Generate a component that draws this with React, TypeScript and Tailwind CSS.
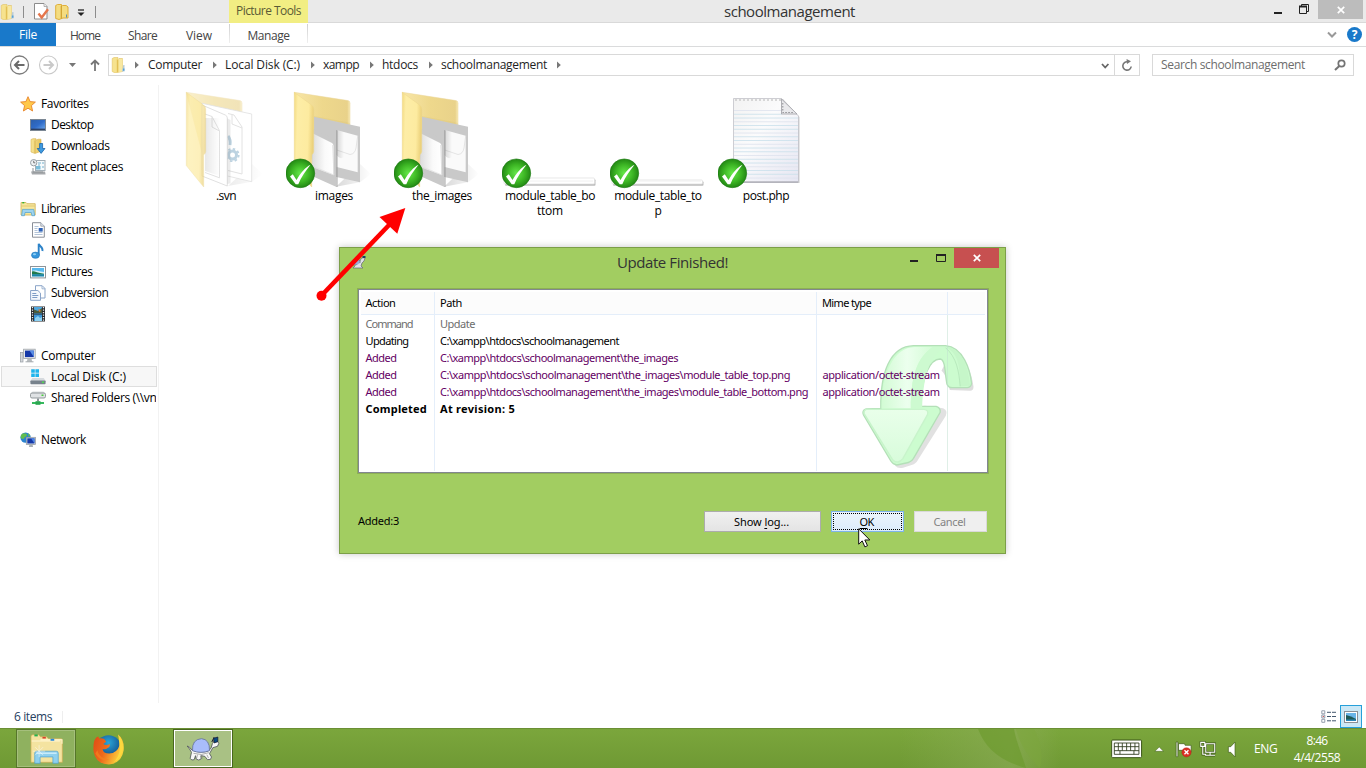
import React, { useLayoutEffect, useRef } from "react";

/* Single line of text whose letter spacing is adjusted to fill a given width. */
function Fit({ w, className = "", children }: { w: number; className?: string; children: React.ReactNode }) {
  const ref = useRef<HTMLSpanElement>(null);
  useLayoutEffect(() => {
    const el = ref.current;
    if (!el) return;
    el.style.letterSpacing = "0px";
    const n = (el.textContent || "").length;
    el.style.letterSpacing = `${(w - el.getBoundingClientRect().width) / n}px`;
  }, [w]);
  return (
    <span ref={ref} className={`inline-block shrink-0 whitespace-pre ${className}`}>
      {children}
    </span>
  );
}

function Defs() {
  return (
    <svg className="absolute h-0 w-0" aria-hidden="true">
      <defs>
        <linearGradient id="flap" x1="0" x2="1" y1="0" y2="0.15">
          <stop offset="0" stopColor="#f3da80" />
          <stop offset="0.2" stopColor="#fdeda6" />
          <stop offset="0.75" stopColor="#fdeba0" />
          <stop offset="1" stopColor="#ecd27c" />
        </linearGradient>
        <linearGradient id="back" x1="0" x2="1">
          <stop offset="0" stopColor="#f8e6a8" />
          <stop offset="0.5" stopColor="#eed88c" />
          <stop offset="0.95" stopColor="#e9d28a" />
          <stop offset="1" stopColor="#f8eab8" />
        </linearGradient>
        <linearGradient id="sheet" x1="0" x2="1">
          <stop offset="0" stopColor="#dcdcdc" />
          <stop offset="0.6" stopColor="#fafafa" />
          <stop offset="1" stopColor="#ffffff" />
        </linearGradient>
        <linearGradient id="cast" x1="0" x2="1">
          <stop offset="0" stopColor="#000" stopOpacity="0.15" />
          <stop offset="1" stopColor="#000" stopOpacity="0" />
        </linearGradient>
        <radialGradient id="ok" cx="0.5" cy="0.5" r="0.55">
          <stop offset="0" stopColor="#66e84a" />
          <stop offset="0.55" stopColor="#3cb524" />
          <stop offset="1" stopColor="#1c7c10" />
        </radialGradient>
        <linearGradient id="note" x1="0" x2="1" y1="0" y2="1">
          <stop offset="0" stopColor="#f2f2f2" />
          <stop offset="0.4" stopColor="#fbfbfc" />
          <stop offset="1" stopColor="#e6e6f2" />
        </linearGradient>
        <linearGradient id="mint" x1="0" x2="1">
          <stop offset="0" stopColor="#d2fbd4" />
          <stop offset="0.5" stopColor="#ecffee" />
          <stop offset="1" stopColor="#d4fcd6" />
        </linearGradient>
        <linearGradient id="mintHead" x1="0" x2="0" y1="0" y2="1">
          <stop offset="0" stopColor="#e9ffea" />
          <stop offset="1" stopColor="#d8fcdb" />
        </linearGradient>
        <linearGradient id="screen" x1="0" x2="1" y1="0" y2="1">
          <stop offset="0" stopColor="#2c5ea8" />
          <stop offset="0.5" stopColor="#2f6bc8" />
          <stop offset="1" stopColor="#74aef0" />
        </linearGradient>
        <linearGradient id="gold" x1="0" x2="1">
          <stop offset="0" stopColor="#f8e596" />
          <stop offset="1" stopColor="#e6c35a" />
        </linearGradient>
        <radialGradient id="globe" cx="0.5" cy="0.3" r="0.7">
          <stop offset="0" stopColor="#2aa5d8" />
          <stop offset="1" stopColor="#0c3a78" />
        </radialGradient>
        <linearGradient id="fox" x1="0" x2="1" y1="0" y2="0.4">
          <stop offset="0" stopColor="#dd4a14" />
          <stop offset="0.5" stopColor="#ee6a1c" />
          <stop offset="1" stopColor="#fbd03c" />
        </linearGradient>
        <linearGradient id="leaf" x1="0" x2="1">
          <stop offset="0" stopColor="#8fae5c" stopOpacity="0" />
          <stop offset="0.7" stopColor="#8fae5c" stopOpacity="0.55" />
          <stop offset="1" stopColor="#8fae5c" stopOpacity="0" />
        </linearGradient>
      </defs>
    </svg>
  );
}

function MiniFolder({ className = "" }: { className?: string }) {
  return (
    <svg viewBox="0 0 16 16" className={`h-4 w-4 shrink-0 ${className}`}>
      <path d="M1.200 1.500 3 .5h4v2l1-1h3.500v13L4 16 1.200 14.500z" fill="#f6e28e" stroke="#dcbb55" strokeWidth=".5" />
      <path d="M5.800 2v13.500l1.500-1V3.500z" fill="#e2bf55" />
      <path d="M7.800 2h3.600v12.600L7.800 15z" fill="#f8e8a2" />
      <path d="M12.300 8h1.200v6.600h-2.700z" fill="#b7cbd6" />
      <path d="M12.200 11.500h1.200v2.300h-1.200z" fill="#3f98d8" />
    </svg>
  );
}

const sideIcons: Record<string, React.ReactNode> = {
  star: (
    <path d="m8 .7 2.1 4.9 5.3.5-4 3.5 1.2 5.4L8 12.2 3.4 15l1.2-5.400-4-3.500 5.300-.5z" fill="#ffc84a" stroke="#e8842a" strokeWidth=".9" strokeLinejoin="round" />
  ),
  desktop: (
    <>
      <rect x=".5" y="2.500" width="15" height="11" fill="url(#screen)" stroke="#7b8794" />
      <path d="M1 12.300h14" stroke="#2c3e60" strokeWidth="1.300" />
    </>
  ),
  downloads: (
    <>
      <path d="M1 1.500 3 .7h3v1.500L8 1.200h3v12L5 15.500 1 14z" fill="url(#gold)" stroke="#d6b251" strokeWidth=".6" />
      <path d="M5 2.500V15" stroke="#cda43c" strokeWidth=".7" />
      <path d="M9.600 5.500h3v5H15l-3.900 4.900-3.900-4.900h2.400z" fill="#3f9be0" stroke="#1b66ab" strokeWidth=".8" />
    </>
  ),
  recent: (
    <>
      <rect x="5.500" y="1.500" width="9.500" height="10" fill="#f5fafc" stroke="#a1adb5" />
      <path d="M8 4h3m-3 2h2m2-2h2m-2 4h2" stroke="#72aecb" />
      <rect x="6" y="7" width="4.500" height="3.500" fill="#79bcd9" />
      <circle cx="3.700" cy="3.700" r="3.200" fill="#eef1f3" stroke="#98a0a6" />
      <path d="M3.700 1.800v2h1.600" stroke="#555" strokeWidth=".8" fill="none" />
      <path d="M1 12.500h14l.6 3H2z" fill="#a5a8ab" />
      <path d="M3 9v4h10" stroke="#8d9296" fill="none" />
    </>
  ),
  libraries: (
    <>
      <path d="M1 1.500h5l1 1.200h8.200V14H1z" fill="#f6e69c" stroke="#d1b154" strokeWidth=".8" />
      <path d="M2.300 1.700h2" stroke="#34b233" strokeWidth="1.400" />
      <path d="M1.300 5h13.500" stroke="#dcc06a" strokeWidth=".8" />
      <path d="M2.500 8.400h11.200l1 6.300h-2.800l-.6-3.200H5l-.6 3.200H1.600z" fill="#9ed4f0" stroke="#5aa6d0" strokeWidth=".8" />
    </>
  ),
  documents: (
    <>
      <path d="M2.500.7h8.300l3.500 3.500v11H2.500z" fill="#fff" stroke="#8a8f98" />
      <path d="M10.800.7v3.500h3.500" fill="#dde4ee" stroke="#8a8f98" strokeWidth=".7" />
      <path d="M4.500 4.500h4M4.500 6.500h3M4.500 8.500h3M4.500 10.500h8M4.500 12.500h8" stroke="#9fb5cf" strokeWidth=".8" />
      <rect x="8.700" y="6" width="4" height="3.600" fill="#2e62b7" />
    </>
  ),
  music: (
    <>
      <path d="M8.700 12V.8c.5 2.600 4.700 3 3.700 7.200" fill="none" stroke="#2c83c9" strokeWidth="1.900" />
      <ellipse cx="5.500" cy="12.200" rx="4" ry="3.100" fill="#3596dc" stroke="#2376b8" strokeWidth=".6" />
      <ellipse cx="4.500" cy="11.300" rx="1.600" ry="1" fill="#8fd0f5" />
    </>
  ),
  pictures: (
    <>
      <rect x=".5" y="2.500" width="15" height="11.400" fill="#fff" stroke="#8e9499" />
      <rect x="2" y="4" width="12" height="8.400" fill="#58b9ef" />
      <path d="M2 7c3-1 5 0 12 1v2H2z" fill="#d8f0f7" />
      <path d="M2 7.500c3-.7 4 1 8 1.600l4 .6v.8H2z" fill="#227a4c" />
      <path d="M2 10.400h12v2H2z" fill="#1f86a5" />
    </>
  ),
  subversion: (
    <>
      <path d="M5.500.7h6.700l2.800 2.800v9.500H5.500z" fill="#fff" stroke="#8aa4c8" />
      <path d="M12 1v2.800h3" fill="none" stroke="#8aa4c8" strokeWidth=".8" />
      <path d="M.6 5.500h7.300l2.600 2.600v7.200H.6z" fill="#f4f8fd" stroke="#8aa4c8" />
      <path d="M2.300 8.500h4m-4 2h6m-6 2h5" stroke="#7d9cc6" />
    </>
  ),
  videos: (
    <>
      <rect x="1" y=".5" width="14" height="15" fill="#26292c" />
      <rect x="4" y="1" width="8" height="6.500" fill="#4fa8e0" />
      <rect x="4" y="8.500" width="8" height="6.500" fill="#3d97d8" />
      <path d="M4 3.500 8 5l4-3v5H4z" fill="#4a5c3c" />
      <path d="M8.500 2.500 11 5l-2 1z" fill="#d9782e" />
      <path d="m5 12 3-2 2 2 2-1v4H5z" fill="#8ed2f2" />
      <path d="M2.500 1v14M13.500 1v14" stroke="#eee" strokeWidth="1.300" strokeDasharray="1.300 1.200" />
    </>
  ),
  computer: (
    <>
      <rect x=".4" y="4.500" width="2.600" height="9.500" fill="#d4d7da" stroke="#999fa5" strokeWidth=".7" />
      <rect x="3.600" y="1.200" width="11.600" height="9.300" fill="#e6e8ea" stroke="#9da3a8" strokeWidth=".8" />
      <rect x="5" y="2.600" width="8.800" height="6.500" fill="#1538a8" />
      <path d="M9.500 2.600h4.300v6.500z" fill="#5b8fe6" />
      <path d="M7.500 10.700h4l.7 3h-5.400z" fill="#b6babd" />
      <path d="M5.500 13.800h8" stroke="#a3a8ad" />
    </>
  ),
  disk: (
    <>
      <path d="M1.200.2h3.600v3.600H1.200zM5.400.2H9v3.600H5.400zM1.200 4.400h3.600V8H1.200zM5.400 4.400H9V8H5.400z" fill="#1fb4ec" />
      <path d="M2.300 9h11.400l2 3H.4z" fill="#d6dade" />
      <rect x=".4" y="11.400" width="15.200" height="3.800" rx=".9" fill="#77828c" />
      <rect x="12" y="12.500" width="2" height="1.400" fill="#4be04b" />
    </>
  ),
  shared: (
    <>
      <path d="M2.500 1.500h11l2 3H.6z" fill="#d9dddf" />
      <rect x=".5" y="3" width="15" height="5" rx="1.500" fill="#dfe2e4" stroke="#888e92" strokeWidth=".9" />
      <rect x="11.500" y="4.500" width="2" height="1.500" fill="#49cd3d" />
      <path d="M8 8.400v3.200" stroke="#8e9599" strokeWidth="2" />
      <path d="M2 13h12" stroke="#35b95d" strokeWidth="2" />
      <rect x="5.500" y="11.200" width="5" height="3.600" fill="#2ba750" />
    </>
  ),
  network: (
    <>
      <circle cx="5.600" cy="5.600" r="5.200" fill="#2c83cf" />
      <path d="M3 1.300C5 2 7 1 7 3S3.500 5 4 7l-3-.5C.3 4 1 2.500 3 1.300zM8 1l2.400 2.600L8.500 5z" fill="#62bd4e" />
      <rect x="6.300" y="5.300" width="9.200" height="7.200" fill="#dfe4e8" stroke="#8c9298" strokeWidth=".7" />
      <rect x="7.300" y="6.300" width="7.200" height="5.200" fill="#1538a8" />
      <path d="M11 6.300h3.500v5.200z" fill="#4c84e4" />
      <path d="M9.500 12.500h3l.6 2.600h-4.200z" fill="#aab0b5" />
    </>
  ),
};

type Row = { icon: string; label: string; w: number; root?: boolean; selected?: boolean };
const sidebar: Row[][] = [
  [
    { icon: "star", label: "Favorites", w: 47.5, root: true },
    { icon: "desktop", label: "Desktop", w: 42.5 },
    { icon: "downloads", label: "Downloads", w: 58.500 },
    { icon: "recent", label: "Recent places", w: 72 },
  ],
  [
    { icon: "libraries", label: "Libraries", w: 44, root: true },
    { icon: "documents", label: "Documents", w: 60.5 },
    { icon: "music", label: "Music", w: 31.5 },
    { icon: "pictures", label: "Pictures", w: 41.5 },
    { icon: "subversion", label: "Subversion", w: 57.5 },
    { icon: "videos", label: "Videos", w: 35 },
  ],
  [
    { icon: "computer", label: "Computer", w: 54.5, root: true },
    { icon: "disk", label: "Local Disk (C:)", w: 75, selected: true },
    { icon: "shared", label: "Shared Folders (\\\\vn", w: 105.5 },
  ],
  [{ icon: "network", label: "Network", w: 45, root: true }],
];

function CheckBadge() {
  return (
    <g>
      <circle cx="14.300" cy="83.300" r="14.400" fill="url(#ok)" stroke="#1d7a12" strokeWidth=".6" />
      <path d="M4 86.500 6.800 84.300 10.500 90C14.500 83 19.500 77.300 24.500 74.800 20 80.500 15 87.500 12.300 94.200h-2.600z" fill="#fff" />
    </g>
  );
}

function FolderBase() {
  return (
    <>
      <path d="M8.300 2.300 62 10.600q2 .4 2 2.600V80L26 70z" fill="url(#back)" stroke="#ead69a" strokeWidth=".5" />
      <path d="M28 26 60 32l4 1v4l-36-8z" fill="#c9ab57" opacity=".12" />
    </>
  );
}

function FolderFlap() {
  return <path d="M8.300 2.300 25.500 15q2.200 1.500 2.200 4v42.500q0 1.500-2 3.500v32L8.300 75.500z" fill="url(#flap)" stroke="#ecd68a" strokeWidth=".5" />;
}

function ImageFolder() {
  return (
    <svg viewBox="0 0 96 99" className="h-[99px] w-24">
      <path d="M50 96.700 74 92.300 85 84 74 74z" fill="url(#cast)" />
      <FolderBase />
      <path d="M28 26.700 74 36.700v55.600L28 82z" fill="#c9c9c9" />
      <path d="M50.700 40 71.700 45.700v36.600L50.700 77z" fill="#fafafa" />
      <path d="M50.700 60 64 64.500q5-.5 6-6.500l1.700-12" fill="none" stroke="#dedede" strokeWidth=".8" />
      <path d="M50.500 40 58 42v25q-4 3-7.500-2z" fill="url(#cast)" />
      <path d="M26 38.500 50 50v46.700L26 86z" fill="#c9c9c9" />
      <path d="M50 40v57h1.800V40.500z" fill="#8f8f8f" opacity=".5" />
      <path d="M27 43.500 46 53q1.500 1 1.500 3v29L26 77z" fill="url(#sheet)" />
      <path d="m26 76 22 9-1.500-30" fill="none" stroke="#dedede" strokeWidth=".7" />
      <FolderFlap />
      <CheckBadge />
    </svg>
  );
}

function SvnFolder() {
  return (
    <svg viewBox="0 0 96 99" className="h-[99px] w-24">
      <path d="M50 96 74 91.700 85 84 74 74z" fill="url(#cast)" opacity=".5" />
      <g opacity=".6"><FolderBase /></g>
      <path d="M24 13.300 73.700 24v67.700L24 80z" fill="#fff" stroke="#e0e0e0" strokeWidth=".8" />
      <path d="M50 23.500 56 25l8 12v47l-14-3.500M54 24.500V34l10 4" fill="none" stroke="#e2e2e2" />
      <g fill="none" stroke="#bdd3e1">
        <circle cx="54.500" cy="65" r="4" strokeWidth="3" />
        <circle cx="54.500" cy="65" r="6.200" strokeWidth="1.800" strokeDasharray="2.400 2.400" />
        <path d="M50 46q3 4 2 9" strokeWidth="3" />
      </g>
      <path d="M24 15 47.300 25q2 1 2 3v68L24 86z" fill="#fff" stroke="#d8d8d8" strokeWidth=".8" />
      <path d="M49.500 28.500V94l3-.7V30z" fill="#777" opacity=".15" />
      <path d="M27 24 34 26.500l7.500 14.300v47L27 82.500M34 26.500V37l7.500 4" fill="none" stroke="#e2e2e2" />
      <path d="M27 28h15v58l-15-5z" fill="url(#cast)" opacity=".6" />
      <g opacity=".7"><FolderFlap /></g>
    </svg>
  );
}

function BarFile({ top }: { top: number }) {
  return (
    <svg viewBox="0 0 96 99" className="h-[99px] w-24">
      <rect x="3" y={top + 1.2} width="90.500" height={94.5 - top} rx="1" fill="#bdbdbd" />
      <rect x="2" y={top} width="90.500" height={94 - top} rx="1" fill="#fff" stroke="#dedede" strokeWidth=".7" />
      <path d="M4 91h87" stroke="#f0f0f0" />
      <CheckBadge />
    </svg>
  );
}

function PhpFile() {
  const lines = Array.from({ length: 19 }, (_, i) => 20.5 + i * 3.75);
  return (
    <svg viewBox="0 0 96 99" className="h-[99px] w-24">
      <path d="M16 9h49l16.500 18v66H16z" fill="#8d8d93" opacity=".45" />
      <path d="M15.500 8.500H63.500L80.500 26v66h-65z" fill="url(#note)" stroke="#c2c2c8" strokeWidth=".8" />
      {lines.map((y, i) => (
        <path key={y} d={`M16 ${y}H${y < 27 ? 64 : 80}`} stroke={i % 3 ? "#c9dfeb" : "#dde2ee"} strokeWidth=".8" />
      ))}
      <path d="M17 10h46" stroke="#cccccc" strokeWidth="1.600" strokeDasharray="2 2" />
      <path d="M63.500 9v15h15.500z" fill="#e9e9ec" stroke="#a6a6ab" strokeWidth=".9" />
      <path d="M64.800 13v9.500h10" fill="none" stroke="#8d8d92" strokeDasharray="1.500 1.500" />
      <path d="M16 92h64" stroke="#9a9aa4" strokeWidth=".8" />
      <CheckBadge />
    </svg>
  );
}

const files = [
  { icon: <SvnFolder />, lines: [{ t: ".svn", w: 20 }] },
  { icon: <ImageFolder />, lines: [{ t: "images", w: 38 }] },
  { icon: <ImageFolder />, lines: [{ t: "the_images", w: 60 }] },
  { icon: <BarFile top={88} />, lines: [{ t: "module_table_bo", w: 90 }, { t: "ttom", w: 26 }] },
  { icon: <BarFile top={90} />, lines: [{ t: "module_table_to", w: 87.5 }, { t: "p", w: 7 }] },
  { icon: <PhpFile />, lines: [{ t: "post.php", w: 46.5 }] },
];

const crumbs = [
  { t: "Computer", w: 54, cell: "w-[77px]" },
  { t: "Local Disk (C:)", w: 75, cell: "w-[98px]" },
  { t: "xampp", w: 36, cell: "w-[59px]" },
  { t: "htdocs", w: 36, cell: "w-[59px]" },
  { t: "schoolmanagement", w: 106, cell: "w-[128px]" },
];

function CrumbArrow() {
  return (
    <svg viewBox="0 0 4 8" className="h-2 w-1 shrink-0"><path d="M0 .5v7L3.800 4z" fill="#777" /></svg>
  );
}

function TitleBar() {
  return (
    <header className="flex h-[23px] shrink-0 border-b border-[#d9d9d9] bg-[#eaeaea]">
      <div className="flex h-[22px] w-[229px] items-center pt-px">
        <MiniFolder />
        <div className="ml-[7px] h-3 w-px bg-[#8c8c8c]" />
        <svg viewBox="0 0 16 17" className="ml-[10px] h-[17px] w-4">
          <path d="M.5.5h9.500l3 3v12.500H.5z" fill="#fff" stroke="#8b8b8b" />
          <path d="M10 .5v3h3" fill="#eee" stroke="#999" strokeWidth=".7" />
          <path d="m4.500 10.500 3.200 4L14 6.300" fill="none" stroke="#e5764c" strokeWidth="2.400" />
        </svg>
        <svg viewBox="0 0 14 16" className="ml-[5px] h-4 w-[14px]">
          <path d="M.7 1.500 2.500.5h4v2l1-1h3.700L13 3v11H8l-4 1.500-3.300-1z" fill="#f4dc80" stroke="#dca92c" strokeWidth=".9" />
          <path d="M6.300 2v12.500" stroke="#cf9f2c" strokeWidth="1.200" />
          <path d="M11.500 10.500v3" stroke="#5c8fb0" />
        </svg>
        <svg viewBox="0 0 8 8" className="ml-[8px] mt-[2px] h-2 w-2"><path d="M1 1h6" stroke="#222" strokeWidth="1.300" /><path d="M.5 3.500h7L4 7z" fill="#222" /></svg>
        <div className="ml-[10px] h-3 w-px bg-[#8c8c8c]" />
      </div>
      <div className="flex h-[23px] w-[79px] items-center justify-center bg-[#f2ee83] text-[#5a5a35]">
        <Fit w={65} className="-mt-px">Picture Tools</Fit>
      </div>
      <div className="flex flex-1 items-center pl-[416px] text-[15px] text-[#333]">
        <Fit w={131}>schoolmanagement</Fit>
      </div>
      <div className="flex h-[19px] items-start">
        <svg viewBox="2 0 44 19" className="h-[19px] w-11">
          <path d="M2 13h8" stroke="#222" strokeWidth="2" />
          <path d="M27.500 6.500h7v7h-7zM29.500 6V4.500h7v7H35" fill="none" stroke="#222" />
          <path d="M27 6.500h8" stroke="#222" strokeWidth="2" />
        </svg>
        <div className="mr-[3px] flex h-[19px] w-[45px] items-center justify-center bg-[#bcbcbc]">
          <svg viewBox="0 0 8 8" className="h-2 w-2"><path d="m.8.8 6.400 6.400m0-6.400L.8 7.200" stroke="#fff" strokeWidth="1.700" /></svg>
        </div>
      </div>
    </header>
  );
}

function RibbonTabs() {
  return (
    <nav className="flex h-6 shrink-0 border-b border-[#dadbdc] bg-white text-[#444]">
      <div className="flex h-[23px] w-14 items-center justify-center bg-[#1979ca] pt-px text-white"><Fit w={18}>File</Fit></div>
      <div className="flex w-[173px] items-center pl-[14px] pt-[3px]">
        <Fit w={30}>Home</Fit>
        <Fit w={29} className="ml-7">Share</Fit>
        <Fit w={26} className="ml-[29px]">View</Fit>
      </div>
      <div className="flex w-[79px] items-center justify-center pt-[3px]">
        <div className="mb-[5px] h-[19px] w-px bg-linear-to-b from-[#d0d0d0] to-[#efefef]" />
        <div className="flex flex-1 justify-center"><Fit w={42}>Manage</Fit></div>
        <div className="mb-[5px] h-[19px] w-px bg-linear-to-b from-[#d0d0d0] to-[#efefef]" />
      </div>
      <div className="flex flex-1 items-center justify-end">
        <svg viewBox="0 0 10 8" className="mr-[10px] h-2 w-[10px]"><path d="m1 1.500 4 4 4-4" fill="none" stroke="#999" strokeWidth="2" /></svg>
        <div className="mr-[4px] flex h-[15px] w-[15px] items-center justify-center rounded-full bg-[#1979ca] text-[12px] leading-none font-bold text-white">?</div>
      </div>
    </nav>
  );
}

function AddressRow() {
  return (
    <div className="flex h-[38px] shrink-0 items-center">
      <svg viewBox="0 0 108 38" className="h-[38px] w-[108px]" fill="none">
        <circle cx="19.500" cy="18" r="9" stroke="#7c7c7c" strokeWidth="1.300" />
        <path d="M24.500 18h-9M19 14l-4 4 4 4" stroke="#6a6a6a" strokeWidth="2" />
        <circle cx="48.500" cy="18" r="9" stroke="#c9c9c9" strokeWidth="1.100" />
        <path d="M43.500 18h9M49 14l4 4-4 4" stroke="#c9c9c9" strokeWidth="2" />
        <path d="M69 16h7l-3.500 4z" fill="#777" />
        <path d="M95 24V13.500M91 17.500l4-4 4 4" stroke="#777" strokeWidth="1.800" />
      </svg>
      <div className="mb-[2px] flex h-[22px] w-[1032px] items-center border border-[#d9d9d9] text-[#1e1e1e]">
        <MiniFolder className="ml-[2px]" />
        <div className="ml-[8px] flex w-[13px] items-center"><CrumbArrow /></div>
        {crumbs.map((c) => (
          <div key={c.t} className={`flex h-5 items-center justify-between pr-2 ${c.cell}`}>
            <Fit w={c.w}>{c.t}</Fit>
            <CrumbArrow />
          </div>
        ))}
        <svg viewBox="-1 0 40 20" className="ml-auto h-5 w-10 shrink-0" fill="none">
          <path d="m2 9 3.200 3.500L8.400 9" stroke="#666" strokeWidth="1.800" />
          <path d="M14.500 0v20" stroke="#d9d9d9" />
          <path d="M27.600 6.800A4.200 4.200 0 1 0 31.200 11.500" stroke="#777" strokeWidth="1.600" />
          <path d="m26.500 4 4.500 2.300-4 2.700z" fill="#777" />
        </svg>
      </div>
      <div className="mb-[2px] ml-3 flex h-[22px] w-[202px] items-center justify-between border border-[#d9d9d9] pl-2 pr-[7px] text-[#6d6d6d]">
        <Fit w={144}>Search schoolmanagement</Fit>
        <svg viewBox="0 0 12 12" className="h-3 w-3" fill="none" stroke="#737373"><circle cx="7.500" cy="4.500" r="3.200" strokeWidth="1.700" /><path d="M5.300 7 1 11" strokeWidth="2" /></svg>
      </div>
    </div>
  );
}

function Sidebar() {
  return (
    <aside className="flex w-[159px] shrink-0 flex-col gap-[21px] border-r border-[#f2f2f2] pt-2">
      {sidebar.map((group) => (
        <div key={group[0].label}>
          {group.map((r) => (
            <div
              key={r.label}
              className={`ml-px flex h-[21px] w-[156px] items-center overflow-hidden border ${r.root ? "pl-[18px]" : "pl-[28px]"} ${r.selected ? "border-[#dedede] bg-[#f7f7f7]" : "border-transparent"}`}
            >
              <svg viewBox="0 0 16 16" className="mr-[5px] h-4 w-4 shrink-0">{sideIcons[r.icon]}</svg>
              <Fit w={r.w}>{r.label}</Fit>
            </div>
          ))}
        </div>
      ))}
    </aside>
  );
}

const logRows = [
  { a: "Command", aw: 47, p: "Update", pw: 35, m: "", mw: 0, c: "text-[#6d6d6d]" },
  { a: "Updating", aw: 43, p: "C:\\xampp\\htdocs\\schoolmanagement", pw: 179, m: "", mw: 0, c: "text-black" },
  { a: "Added", aw: 31, p: "C:\\xampp\\htdocs\\schoolmanagement\\the_images", pw: 238, m: "", mw: 0, c: "text-[#640064]" },
  { a: "Added", aw: 31, p: "C:\\xampp\\htdocs\\schoolmanagement\\the_images\\module_table_top.png", pw: 350, m: "application/octet-stream", mw: 117, c: "text-[#640064]" },
  { a: "Added", aw: 31, p: "C:\\xampp\\htdocs\\schoolmanagement\\the_images\\module_table_bottom.png", pw: 368, m: "application/octet-stream", mw: 117, c: "text-[#640064]" },
  { a: "Completed", aw: 61.5, p: "At revision: 5", pw: 75, m: "", mw: 0, c: "font-bold text-black" },
];

function UpdateDialog() {
  return (
    <section className="absolute left-[339px] top-[247px] flex h-[307px] w-[667px] flex-col border border-[#7c9f48] bg-[#a2cd61] font-['Noto_Sans','Open_Sans',sans-serif] text-[11px] text-black shadow-[0_0_7px_rgba(0,0,0,0.22)]">
      <div className="flex h-[41px] shrink-0 items-start text-[#333]">
        <svg viewBox="0 0 16 16" className="ml-[10px] mt-[7px] h-4 w-4">
          <path d="M3 8c1-5 7-5 8 0v2H3z" fill="#9badd6" stroke="#667" strokeWidth=".7" />
          <path d="M10 8c0-4 2-6 5-5l-1 3-2 2-1 3 2 2H3l2-2" fill="#dfe2e8" stroke="#667" strokeWidth=".7" />
          <path d="M12.500 1h3v2h-3z" fill="#173e66" />
        </svg>
        <div className="flex flex-1 pl-[251px] pt-[3px] font-['Open_Sans','Noto_Sans',sans-serif] text-[15px] leading-[22px]">
          <Fit w={111}>Update Finished!</Fit>
        </div>
        <svg viewBox="1 0 46 20" className="h-5 w-[46px]">
          <path d="M3 13h8" stroke="#222" strokeWidth="2" />
          <path d="M29.500 6.500h9v7h-9z" fill="none" stroke="#222" />
          <path d="M29 7h10" stroke="#222" strokeWidth="2" />
        </svg>
        <div className="mr-[6px] flex h-5 w-[45px] items-center justify-center bg-[#c75050]">
          <svg viewBox="0 0 8 8" className="h-2 w-2"><path d="m.8.8 6.400 6.400m0-6.400L.8 7.200" stroke="#fff" strokeWidth="1.700" /></svg>
        </div>
      </div>

      <div className="relative ml-[18px] flex h-[184px] w-[630px] shrink-0 flex-col border border-[#828790] bg-white outline-1 outline-[#8db054]">
        <svg viewBox="180 300 350 390" className="absolute left-[501px] top-[49px] h-[130px] w-[117px]">
          <path d="M250 508 196 516q-8 6-3 14l88 144q8 10 24 6l32-10q10-6 14-16l82-130q6-16-8-22l-54-8z" fill="#777" opacity=".22" transform="translate(4 6)" />
          <path d="M445 448c-6-20-14-52-25-58l30-60c40 16 60 60 66 108q0 12-10 12z" fill="#777" opacity=".25" transform="translate(4 5)" />
          <path d="M242 508C240 400 270 322 340 320h96c54 4 74 74 78 112q0 12-12 14h-46q-12 0-16-12c-6-32-4-72-20-74-30 0-56 50-58 142h46q14 4 12 18L340 658q-8 12-22 14l-28 6q-12-2-18-12L190 528q-6-14 8-18z" fill="#ccfccf" stroke="#b4e0b8" strokeWidth="4" />
          <path d="M244 508C246 400 280 326 344 324h54c-48 30-66 90-66 184z" fill="url(#mint)" />
          <path d="M332 508c0-94 18-150 66-184h38c-50 26-66 90-70 180l-34 4z" fill="#cdfad0" />
          <path d="M436 324c44 20 42 70 44 118l30-2c-6-60-26-114-74-116z" fill="#c6f6c9" />
          <path d="M436 326c34 30 40 70 44 116" fill="none" stroke="#aee0b4" strokeWidth="2" />
          <path d="M198 511h174q14 2 10 16l-74 132q-14 18-30 4L192 524q-2-10 6-13z" fill="url(#mintHead)" stroke="#c8f4cb" strokeWidth="4" />
        </svg>
        <div className="relative m-[2px] flex h-[23px] border-b border-[#e4eefa] bg-[#fcfcfc]">
          <div className="flex w-[74px] items-center border-r border-[#e4eefa] pl-[4.5px]"><Fit w={30}>Action</Fit></div>
          <div className="flex w-[382px] items-center border-r border-[#e4eefa] pl-[5px]"><Fit w={22}>Path</Fit></div>
          <div className="flex w-[131px] items-center border-r border-[#e4eefa] pl-[5px]"><Fit w={49}>Mime type</Fit></div>
        </div>
        <div className="relative mx-[2px] mb-[1px] -mt-[2px] flex flex-1">
          <div className="w-[74px] border-r border-[#e4eefa] pl-[4.5px]">
            {logRows.map((r, i) => <div key={i} className={`h-[17px] leading-[17px] ${r.c}`}><Fit w={r.aw}>{r.a}</Fit></div>)}
          </div>
          <div className="w-[382px] border-r border-[#e4eefa] pl-[5px]">
            {logRows.map((r, i) => <div key={i} className={`h-[17px] leading-[17px] ${r.c}`}><Fit w={r.pw}>{r.p}</Fit></div>)}
          </div>
          <div className="w-[131px] border-r border-[#bfe0cf]/50 pl-[5.5px]">
            {logRows.map((r, i) => <div key={i} className={`h-[17px] leading-[17px] ${r.c}`}>{r.m && <Fit w={r.mw}>{r.m}</Fit>}</div>)}
          </div>
        </div>
      </div>

      <div className="mt-[38px] flex h-[21px] items-center pl-[18px]">
        <Fit w={41} className="mb-[2px]">Added:3</Fit>
        <div className="ml-[305px] flex h-[21px] w-[117px] items-center justify-center border border-[#acacac] bg-linear-to-b from-[#f0f0f0] to-[#e4e4e4] pr-[2px]">
          <Fit w={55}>Show <span className="underline underline-offset-2">l</span>og...</Fit>
        </div>
        <div className="ml-[10px] flex h-[21px] w-[73px] border border-[#7eb4ea] bg-linear-to-b from-[#ecf4fc] to-[#dcecfc] p-px">
          <div className="flex flex-1 items-center justify-center border border-dotted border-black pr-[2px]"><Fit w={14}><span className="underline underline-offset-2">O</span>K</Fit></div>
        </div>
        <div className="ml-[10px] flex h-[21px] w-[73px] items-center justify-center border border-[#d9d9d9] bg-[#efefef] pr-[2px] text-[#838383]"><Fit w={32}>Cancel</Fit></div>
      </div>
    </section>
  );
}

function Taskbar() {
  return (
    <footer className="relative flex h-10 shrink-0 border-t border-[#6b8f35] bg-linear-to-b from-[#7ba63c] to-[#6f9934] text-white">
      <svg viewBox="0 0 160 39" className="absolute left-[900px] top-0 h-[39px] w-[160px]">
        <path d="M0 0h160v39H0z" fill="url(#leaf)" />
        <path d="M78 0c8 20 22 32 48 39C122 26 116 12 114 0z" fill="#6b9a2c" opacity=".6" />
        <path d="M116 0c4 14 10 26 24 39 4-14 0-28-6-39z" fill="#7ba63c" opacity=".5" />
      </svg>
      <div className="ml-4 flex h-[39px] w-[60px] items-center justify-center border border-[#56762a] bg-[#8fb15f] inset-ring inset-ring-[#a5bf7c]">
        <svg viewBox="86 102 104 92" className="h-[31px] w-[35px]">
          <path d="M92 112q0-5 5-5h18l5 6h18l6 6h37q4 0 4 4v66H92z" fill="#f4e3a0" stroke="#d2ac50" strokeWidth="2" />
          <path d="M94 126h84M120 122h64v12" stroke="#fff6cf" strokeWidth="3" fill="none" />
          <path d="M102 109h10" stroke="#23b14d" strokeWidth="6" />
          <path d="M126 116h10" stroke="#d9402c" strokeWidth="5" />
          <path d="M150 122h11" stroke="#2a88d8" strokeWidth="6" />
          <path d="M103 192v-30q0-6 6-6h58q6 0 6 6v30h-16v-19h-38v19z" fill="#8fd0ee" stroke="#4aa0cd" strokeWidth="2" />
          <path d="M108 162h60" stroke="#d0effc" strokeWidth="4" />
          <path d="M116 138v36M98 156h36M104 144l24 24M128 144l-24 24" stroke="#fff" strokeWidth="1.500" opacity=".9" />
        </svg>
      </div>
      <svg viewBox="278 96 94 96" className="ml-[17px] mt-1 h-8 w-[31px]">
        <circle cx="325" cy="140" r="38" fill="url(#globe)" />
        <path d="M281 122q4-14 13-16l3 6q8-2 15 2l6 8-9 7q8 6 20 0 2 9-8 13-4 4-14 2 2 14 20 14 24-2 31-24 4-18-4-34 20 16 17 48-6 40-45 43-40-2-46-39-2-14 1-30z" fill="url(#fox)" />
        <path d="M354 100q16 14 15 40-2 30-28 44 18-18 18-42-2-28-5-42z" fill="#fdd83e" />
        <path d="M291 148q6 26 38 28-30 8-44-18z" fill="#f58220" opacity=".7" />
      </svg>
      <div className="ml-[49px] flex h-[39px] w-[60px] items-center justify-center border border-[#48661f] bg-[#a9c184] inset-ring inset-ring-white">
        <svg viewBox="558 106 104 78" className="h-[26px] w-[35px]">
          <path d="M561 136q8 2 14 12 20 10 48 4 12-6 14-24l8-10q8 2 11 10l-4 9-14 4-10 18 6 10q0 10-12 8l-8-10-12-2 1 10q-8 6-15 0l-2-10-4 12q-8 4-12-4l4-18q-6-12-13-19z" fill="#f8f8f8" stroke="#51555c" strokeWidth="2.500" />
          <path d="M577 150q-2-34 27-36 25 2 24 36-26 10-51 0z" fill="#a9bdfb" stroke="#66739e" strokeWidth="2.500" />
          <path d="M640 113l13-4v14l-11 4z" fill="#0a4a86" stroke="#112" strokeWidth="2" />
          <path d="M635 124l7-15" stroke="#223" strokeWidth="3" />
          <path d="M580 158q24 8 46-2M592 162l-3 12M620 162l5 10M606 164v10" stroke="#888" strokeWidth="2" fill="none" />
        </svg>
      </div>
      <div className="relative ml-auto flex">
        <svg viewBox="450 101 400 117" className="h-[39px] w-[133px]">
          <rect x="455" y="134" width="90" height="53" rx="3" fill="#fff" stroke="#3b5518" strokeWidth="3" />
          <path d="M463 143h74v34h-74zM463 154h74M463 166h74M475 143v23M487 143v23M500 143v23M512 143v23M525 143v23M480 166v11M522 166v11" fill="none" stroke="#2d3a1c" strokeWidth="2.600" />
          <path d="m585 168 13-13 13 13z" fill="#fff" stroke="#3f5c1b" strokeWidth="1.500" />
          <path d="M649 140h5v44h-5zM656 145h18l2 5h18v20h-20l-2-5h-16z" fill="#fff" stroke="#3c561b" strokeWidth="2" />
          <circle cx="680" cy="171" r="14" fill="#d93025" stroke="#a8180f" />
          <path d="m674 165 12 12m0-12-12 12" stroke="#fff" strokeWidth="4" />
          <g fill="none" stroke="#3c561b" strokeWidth="7"><path d="M738 145h27v26h-27zM751 171v9M736 180h30M723 141h12v12h-12zM729 153v24h10" /></g>
          <g fill="none" stroke="#fff" strokeWidth="3.300"><path d="M738 145h27v26h-27zM751 171v9M736 180h30M723 141h12v12h-12zM729 153v24h10" /></g>
          <path d="M806 154h7l13-14v45l-13-14h-7z" fill="#fff" stroke="#3f5c1b" strokeWidth="2" />
        </svg>
        <div className="ml-[11px] flex items-center"><Fit w={23.5}>ENG</Fit></div>
        <div className="ml-[15.5px] mr-[25px] flex w-[48px] flex-col items-center pt-[3px] leading-[17px]">
          <Fit w={21}>8:46</Fit>
          <Fit w={46.5}>4/4/2558</Fit>
        </div>
      </div>
    </footer>
  );
}

export default function App() {
  return (
    <div className="relative flex h-[768px] w-[1366px] flex-col overflow-hidden bg-white font-['Open_Sans','Noto_Sans',sans-serif] text-[12px] leading-[16px] text-black">
      <Defs />
      <TitleBar />
      <RibbonTabs />
      <AddressRow />
      <div className="flex h-[618px] shrink-0">
        <Sidebar />
        <main className="flex pl-[13px] pt-[5px]">
          {files.map((f, i) => (
            <div key={i} className="flex w-[108px] flex-col items-center leading-[15px]">
              <div className="h-[98px]">{f.icon}</div>
              {f.lines.map((l) => <Fit key={l.t} w={l.w}>{l.t}</Fit>)}
            </div>
          ))}
        </main>
      </div>
      <div className="flex h-[25px] shrink-0 items-center pl-[14px] pt-[2px] text-[#26415f]">
        <Fit w={38}>6 items</Fit>
        <div className="ml-[10px] h-3 w-px bg-[#eeeeee]" />
        <svg viewBox="0 0 16 14" className="ml-auto mr-[3px] h-[14px] w-4">
          <path d="M.8.800h3v3h-3zM.8 5h3v3h-3zM.8 9.300h3v3h-3z" fill="#fff" stroke="#8a94a4" strokeWidth=".9" />
          <path d="M6 2.300h4m1 0h4M6 6.500h4m1 0h4M6 10.800h4m1 0h4" stroke="#44586e" />
          <path d="M1.800 6.500h1" stroke="#c33" />
        </svg>
        <div className="mr-[4px] flex h-[23px] w-[22px] items-center justify-center self-end border border-[#26a0da] bg-[#cbe8f6]">
          <svg viewBox="0 0 14 12" className="h-3 w-[14px]">
            <rect x=".5" y=".5" width="13" height="11" fill="#fff" stroke="#8a8f96" />
            <rect x="2" y="2" width="10" height="8" fill="#69b5e8" />
            <path d="M2 4q5 1 10 4v2H2z" fill="#1f5a57" />
            <path d="M2 8.500h10V10H2z" fill="#2a86b9" />
          </svg>
        </div>
      </div>
      <Taskbar />
      <UpdateDialog />
      <svg viewBox="310 200 100 105" className="absolute left-[310px] top-[200px] h-[105px] w-[100px]">
        <path d="M321.500 295.500 390 224" stroke="#f00" strokeWidth="4.600" />
        <circle cx="321.500" cy="295.700" r="5" fill="#f00" />
        <path d="M405.300 208 379.500 217l17.800 16.800z" fill="#f00" />
      </svg>
      <svg viewBox="0 0 13 20" className="absolute left-[858px] top-[528px] h-5 w-[13px]">
        <path d="M.7.800v15.400l3.500-3.300 2.700 6 2.600-1.200-2.700-5.700h5z" fill="#fff" stroke="#111" strokeWidth="1" />
      </svg>
    </div>
  );
}
